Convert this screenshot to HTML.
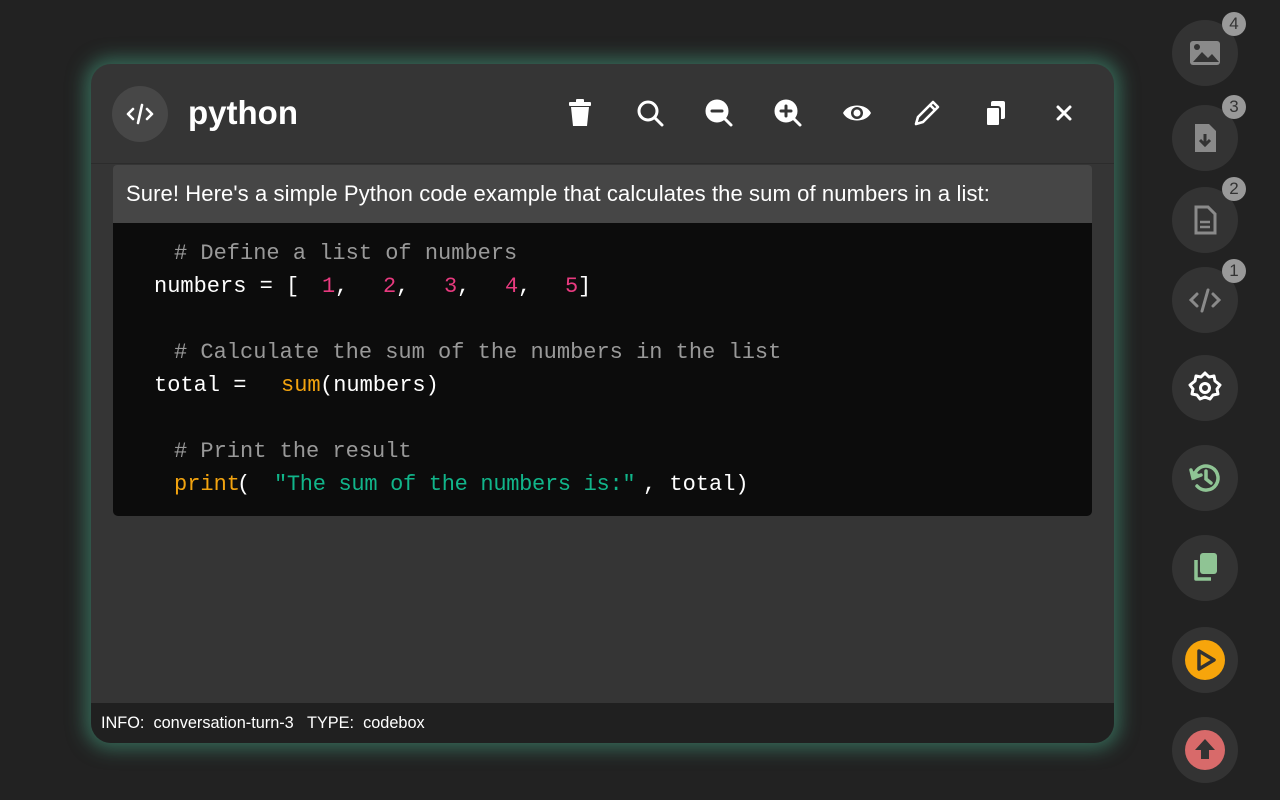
<!DOCTYPE html>
<html><head><meta charset="utf-8"><style>
*{margin:0;padding:0;box-sizing:border-box}
body{width:1280px;height:800px;background:#222;position:relative;overflow:hidden;font-family:"Liberation Sans",sans-serif}
.panel{position:absolute;left:91px;top:64px;width:1023px;height:679px;background:#353535;border-radius:20px;box-shadow:0 0 18px 6px rgba(70,160,130,.55);overflow:hidden}
.hdr{position:absolute;left:0;top:0;width:100%;height:100px;border-bottom:1px solid #2c2c2c}
.logo{position:absolute;left:21px;top:22px;width:56px;height:56px;border-radius:50%;background:#474747}
.title{position:absolute;left:97px;top:30px;color:#fff;font-weight:bold;font-size:33px}
.ic{position:absolute;top:33px;width:32px;height:32px}
.msg{position:absolute;left:22px;top:101px;width:979px;height:58px;background:#464646;border-radius:4px 4px 0 0;color:#fff;font-size:22px;padding:16px 13px;letter-spacing:.1px;white-space:nowrap}
.code{position:absolute;left:22px;top:159px;width:979px;height:293px;background:#0c0c0c;border-radius:0 0 5px 5px;font-family:"Liberation Mono",monospace;font-size:22px;color:#fff}
.code span{position:absolute;white-space:pre;line-height:33px}
.c{color:#999!important}.n{color:#e83a7f!important}.f{color:#f2a30f!important}.s{color:#11b58a!important}
.foot{position:absolute;left:0;bottom:0;width:100%;height:40px;background:#202020;color:#fff;font-size:16.3px;padding:11px 10px}
.btn{position:absolute;left:1172px;width:66px;height:66px;border-radius:50%;background:#333}
.btn svg{position:absolute;left:15px;top:15px;width:36px;height:36px}
.bd{position:absolute;left:1222px;width:24px;height:24px;border-radius:50%;background:#999;color:#333;font-size:17px;text-align:center;line-height:24px}
</style></head><body>
<div class="panel">
 <div class="hdr">
  <div class="logo"><svg width="56" height="56" viewBox="0 0 56 56" fill="none" stroke="#fff" stroke-width="2.6" stroke-linecap="round" stroke-linejoin="round"><path d="M21 23l-5 5 5 5M35 23l5 5-5 5M30 19l-4 18"/></svg></div>
  <div class="title">python</div>
  <svg class="ic" style="left:473px" viewBox="0 0 32 32" fill="#fff"><rect x="5" y="5" width="22" height="4" rx="1"/><rect x="12" y="2" width="8" height="4" rx="1"/><path d="M7 10h18l-2 19H9z"/></svg>
  <svg class="ic" style="left:543px" viewBox="0 0 32 32" fill="none" stroke="#fff" stroke-width="3" stroke-linecap="round"><circle cx="14" cy="14" r="9"/><path d="M21 21l7 7"/></svg>
  <svg class="ic" style="left:612px" viewBox="0 0 32 32" stroke="#fff" stroke-width="3" stroke-linecap="round"><circle cx="14" cy="14" r="10" fill="#fff"/><path d="M21 21l7 7"/><path d="M9 14h10" stroke="#353535"/></svg>
  <svg class="ic" style="left:681px" viewBox="0 0 32 32" stroke="#fff" stroke-width="3" stroke-linecap="round"><circle cx="14" cy="14" r="10" fill="#fff"/><path d="M21 21l7 7"/><path d="M9 14h10M14 9v10" stroke="#353535"/></svg>
  <svg class="ic" style="left:750px" viewBox="0 0 32 32"><path d="M2 16C7 6 25 6 30 16 25 26 7 26 2 16z" fill="#fff"/><circle cx="16" cy="16" r="6" fill="#353535"/><circle cx="16" cy="16" r="3.5" fill="#fff"/></svg>
  <svg class="ic" style="left:820px" viewBox="0 0 32 32" fill="none" stroke="#fff" stroke-width="2.6" stroke-linejoin="round"><path d="M5 27l2-7L22 5l5 5-15 15z M19 8l5 5"/></svg>
  <svg class="ic" style="left:889px" viewBox="0 0 32 32" fill="#fff"><rect x="11" y="4" width="14" height="18" rx="2"/><rect x="6" y="10" width="14" height="19" rx="2" stroke="#353535" stroke-width="2"/></svg>
  <svg class="ic" style="left:957px" viewBox="0 0 32 32" stroke="#fff" stroke-width="3" stroke-linecap="round"><path d="M10 10l12 12M22 10L10 22"/></svg>
 </div>
 <div class="msg">Sure! Here's a simple Python code example that calculates the sum of numbers in a list:</div>
 <div class="code">
  <span class="c" style="left:61px;top:14px"># Define a list of numbers</span>
  <span style="left:41px;top:47px">numbers = [</span>
  <span class="n" style="left:209px;top:47px">1</span><span style="left:222px;top:47px">,</span>
  <span class="n" style="left:270px;top:47px">2</span><span style="left:283px;top:47px">,</span>
  <span class="n" style="left:331px;top:47px">3</span><span style="left:344px;top:47px">,</span>
  <span class="n" style="left:392px;top:47px">4</span><span style="left:405px;top:47px">,</span>
  <span class="n" style="left:452px;top:47px">5</span><span style="left:465px;top:47px">]</span>
  <span class="c" style="left:61px;top:113px"># Calculate the sum of the numbers in the list</span>
  <span style="left:41px;top:146px">total =</span>
  <span class="f" style="left:168px;top:146px">sum</span><span style="left:207px;top:146px">(numbers)</span>
  <span class="c" style="left:61px;top:212px"># Print the result</span>
  <span class="f" style="left:61px;top:245px">print</span><span style="left:124px;top:245px">(</span>
  <span class="s" style="left:161px;top:245px;letter-spacing:-.3px">"The sum of the numbers is:"</span>
  <span style="left:530px;top:245px">, total)</span>
 </div>
 <div class="foot">INFO:&nbsp; conversation-turn-3 &nbsp; TYPE:&nbsp; codebox</div>
</div>

<div class="btn" style="top:20px"><svg viewBox="0 0 36 36"><rect x="3" y="6" width="30" height="24" rx="3" fill="#8a8a8a"/><circle cx="10" cy="12" r="3" fill="#333"/><path d="M6 27l9-10 6 6 4-4 7 8z" fill="#333"/></svg></div>
<div class="bd" style="top:12px">4</div>
<div class="btn" style="top:105px"><svg viewBox="0 0 36 36"><path d="M8 4h14l7 7v21H8z" fill="#8a8a8a"/><path d="M18 14v11M13 20l5 5 5-5" stroke="#333" stroke-width="3" fill="none"/></svg></div>
<div class="bd" style="top:95px">3</div>
<div class="btn" style="top:187px"><svg viewBox="0 0 36 36"><path d="M9 5h12l7 7v19H9z" fill="none" stroke="#8a8a8a" stroke-width="3"/><path d="M13 20h10M13 25h10" stroke="#8a8a8a" stroke-width="2.5"/></svg></div>
<div class="bd" style="top:177px">2</div>
<div class="btn" style="top:267px"><svg viewBox="0 0 36 36" fill="none" stroke="#8a8a8a" stroke-width="3" stroke-linecap="round"><path d="M10 12l-6 6 6 6M26 12l6 6-6 6M21 8l-6 21"/></svg></div>
<div class="bd" style="top:259px">1</div>
<div class="btn" style="top:355px"><svg viewBox="0 0 36 36" fill="none" stroke="#fff" stroke-width="3"><path d="M18 3l4 4 5-1 1 5 5 4-3 4 1 5-5 1-3 4-5-2-5 2-3-4-5-1 1-5-3-4 5-4 1-5 5 1z" stroke-linejoin="round"/><circle cx="18" cy="18" r="4.5"/></svg></div>
<div class="btn" style="top:445px"><svg viewBox="0 0 36 36" fill="none" stroke="#8fc494" stroke-width="3.5" stroke-linecap="round"><path d="M7 18a12 12 0 1 1 3 8"/><path d="M4 10l2 8 8-3" fill="#8fc494"/><path d="M19 11v8l5 4"/></svg></div>
<div class="btn" style="top:535px"><svg viewBox="0 0 36 36"><rect x="13" y="3" width="17" height="21" rx="3" fill="#8fc494"/><path d="M9 10v19h15" fill="none" stroke="#8fc494" stroke-width="3.5" stroke-linejoin="round"/></svg></div>
<div class="btn" style="top:627px"><svg viewBox="-3 -3 42 42" style="left:12px;top:12px;width:42px;height:42px"><circle cx="18" cy="18" r="20" fill="#f7a50b"/><path d="M12 9l15 9-15 9z" fill="none" stroke="#333" stroke-width="3.5" stroke-linejoin="round"/></svg></div>
<div class="btn" style="top:717px"><svg viewBox="-3 -3 42 42" style="left:12px;top:12px;width:42px;height:42px"><circle cx="18" cy="18" r="20" fill="#d86a6a"/><path d="M18 7l10 11h-6v9h-8v-9H8z" fill="#333"/></svg></div>
</body></html>
